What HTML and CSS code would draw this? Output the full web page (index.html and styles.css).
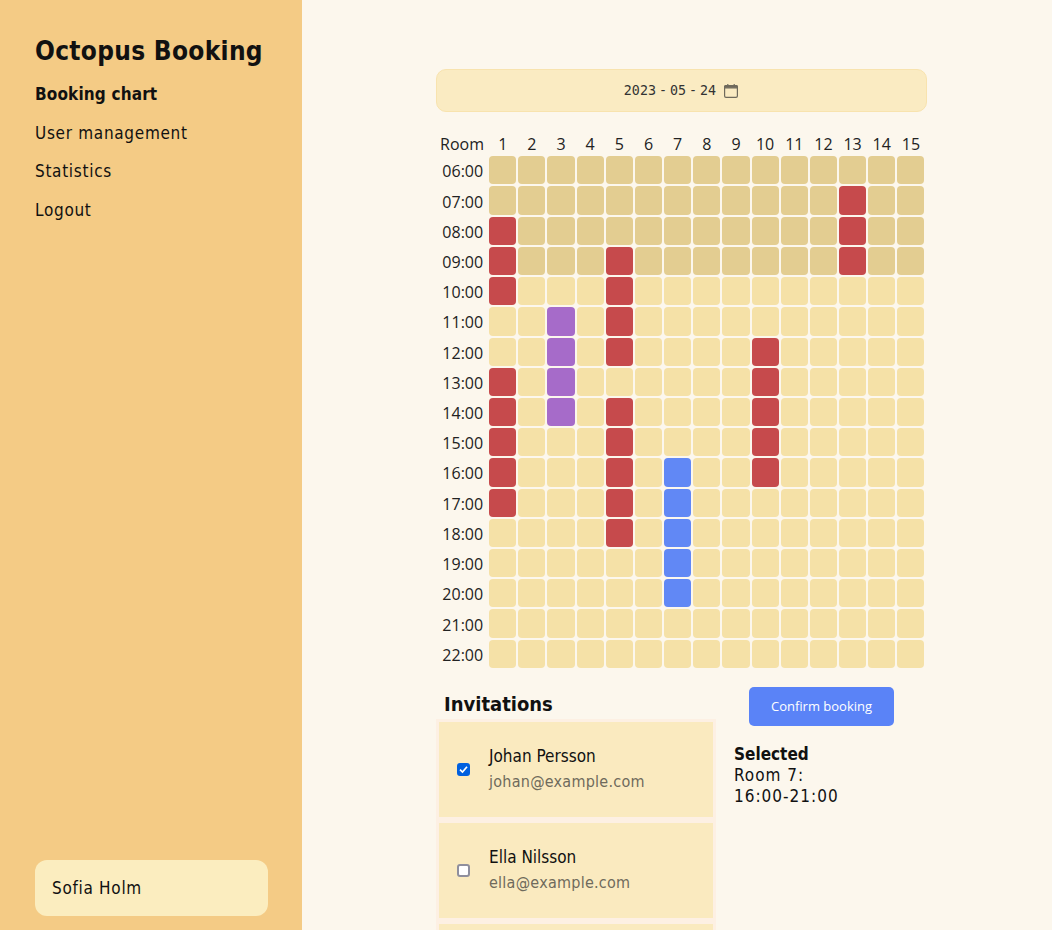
FILE: index.html
```html
<!DOCTYPE html>
<html lang="en">
<head>
    <meta charset="UTF-8">
    <meta name="viewport" content="width=device-width, initial-scale=1.0">
    <title>Octopus Booking</title>
    <link rel="stylesheet" href="styles.css">
</head>
<body>
<div class="app">
    <!-- Sidebar -->
    <aside class="sidebar">
        <h1 class="brand">Octopus Booking</h1>
        <nav class="nav">
            <a class="nav-link active" href="#">Booking chart</a>
            <a class="nav-link" href="#">User management</a>
            <a class="nav-link" href="#">Statistics</a>
            <a class="nav-link" href="#">Logout</a>
        </nav>
        <div class="user-box">Sofia Holm</div>
    </aside>

    <!-- Main content -->
    <main class="main">
        <div class="content">
            <div class="date-bar">
                <span class="date-text">2023<span class="sep">-</span>05<span class="sep">-</span>24</span>
                <svg class="cal-icon" width="16" height="16" viewBox="0 0 16 16" fill="none" stroke="#6f6a5c" stroke-width="1.2">
                    <rect x="1.6" y="2.6" width="12.8" height="11.8" rx="1.4"/>
                    <path d="M1.6 4 a1.4 1.4 0 0 1 1.4-1.4 h10 a1.4 1.4 0 0 1 1.4 1.4 V4.8 H1.6 Z" fill="#6f6a5c"/>
                    <path d="M4.8 1v2M11.2 1v2"/>
                </svg>
            </div>

            <div class="chart" id="chart"></div>

            <div class="lower">
                <section class="invitations">
                    <h2 class="inv-title">Invitations</h2>
                    <ul class="inv-list">
                        <li class="inv-card">
                            <input type="checkbox" checked>
                            <div>
                                <div class="inv-name">Johan Persson</div>
                                <div class="inv-mail">johan@example.com</div>
                            </div>
                        </li>
                        <li class="inv-card">
                            <input type="checkbox">
                            <div>
                                <div class="inv-name">Ella Nilsson</div>
                                <div class="inv-mail">ella@example.com</div>
                            </div>
                        </li>
                        <li class="inv-card"></li>
                    </ul>
                </section>
                <section class="summary">
                    <button class="confirm" type="button">Confirm booking</button>
                    <div class="selected">
                        <strong>Selected</strong><br>
                        Room 7:<br>
                        16:00-21:00
                    </div>
                </section>
            </div>
        </div>
    </main>
</div>
<script src="script.js"></script>
</body>
</html>
```

FILE: styles.css
```css
* {
    box-sizing: border-box;
}

html, body {
    height: 100%;
}

body {
    margin: 0;
    font-family: "DejaVu Sans Condensed", "DejaVu Sans", sans-serif;
    color: #111;
    background-color: #fcf7ed;
}

.app {
    display: flex;
    height: 100vh;
    overflow: hidden;
}

.sidebar {
    display: flex;
    flex-direction: column;
    flex: 0 0 302px;
    width: 302px;
    padding: 35px 34px 14px 35px;
    background-color: #f4cb85;
}

.brand {
    margin: 0 0 17px;
    font-size: 26px;
    font-weight: 700;
    line-height: 33px;
    letter-spacing: 0.3px;
    white-space: nowrap;
}

.nav {
    display: flex;
    flex-direction: column;
    flex: 1;
    gap: 19px;
}

.nav-link {
    font-size: 17px;
    line-height: 19.5px;
    letter-spacing: 0.7px;
    color: #111;
    text-decoration: none;
}

.nav-link.active {
    font-weight: 700;
    letter-spacing: 0.15px;
}

.user-box {
    height: 56px;
    padding: 0 17px;
    border-radius: 12px;
    background-color: #fbedbf;
    font-size: 17px;
    line-height: 56px;
    letter-spacing: 0.7px;
}

.main {
    flex: 1;
    min-width: 0;
}

.content {
    width: 491px;
    margin: 69px 0 0 134px;
}

.date-bar {
    display: flex;
    align-items: center;
    justify-content: center;
    gap: 7px;
    height: 43px;
    border: 1px solid #f8e3ae;
    border-radius: 10px;
    background-color: #faebc2;
}

.date-text {
    font-family: "DejaVu Sans Mono", monospace;
    font-size: 13.33px;
    color: #333;
}

.sep {
    margin: 0 3px;
}

.cal-icon {
    display: block;
}

.chart {
    display: grid;
    grid-template-columns: 47.15px repeat(15, 27.16px);
    grid-template-rows: 22.2px;
    grid-auto-rows: 28.22px;
    column-gap: 2px;
    row-gap: 2px;
    margin: 20px 0 0 4px;
    font-family: "Open Sans", sans-serif;
    font-size: 16px;
}

.head, .time {
    display: flex;
    align-items: center;
    justify-content: center;
    padding-top: 2px;
    color: #222;
}

.head:first-child {
    padding-right: 3px;
}

.time {
    justify-content: flex-end;
    padding-right: 4px;
}

.cell {
    border-radius: 4px;
    background-color: #f5e1a7;
}

.cell.past {
    background-color: #e3cd91;
}

.cell.booked {
    background-color: #c64a4c;
}

.cell.invited {
    background-color: #a66bc9;
}

.cell.selected-cell {
    background-color: #6188f5;
}

.lower {
    display: flex;
    margin-top: 16px;
}

.invitations {
    flex: 0 0 280px;
}

.inv-title {
    margin: 0 0 1px 8px;
    padding-top: 6px;
    font-size: 20px;
    font-weight: 700;
    line-height: 28px;
}

.inv-list {
    margin: 0;
    padding: 0;
    list-style: none;
}

.inv-card {
    display: flex;
    align-items: center;
    gap: 19px;
    height: 101px;
    padding: 0 18px 0 18px;
    border: 3px solid #fdf0e3;
    background-color: #faeabf;
}

.inv-card input {
    flex: none;
    width: 13px;
    height: 13px;
    margin: 0;
    appearance: none;
    border: 2px solid #8f8f9d;
    border-radius: 3px;
    background-color: white;
}

.inv-card input:checked {
    border-color: #0060df;
    background: #0060df url("data:image/svg+xml,%3Csvg xmlns='http://www.w3.org/2000/svg' viewBox='0 0 9 9'%3E%3Cpath d='M1 4.6 3.5 7 8 1.8' fill='none' stroke='white' stroke-width='1.7'/%3E%3C/svg%3E") center / 9px 9px no-repeat;
}

.inv-name {
    font-size: 17px;
    line-height: 25px;
}

.inv-mail {
    font-size: 16px;
    line-height: 25px;
    letter-spacing: 0.25px;
    color: #6f6a5c;
}

.summary {
    flex: 1;
}

.confirm {
    display: block;
    width: 145px;
    height: 39px;
    margin: 3px 0 0 33px;
    border: none;
    border-radius: 5px;
    background-color: #5a83f7;
    color: white;
    font-family: "Open Sans", sans-serif;
    font-size: 13px;
}

.selected {
    margin: 18px 0 0 18px;
    font-size: 17px;
    line-height: 21px;
    letter-spacing: 1px;
}

.selected strong {
    letter-spacing: 0;
}
```

FILE: script.js
```js
// Booked ranges per room: [room, first hour, last hour, kind]
const bookings = [
    [1, 8, 10, 'booked'],
    [1, 13, 17, 'booked'],
    [3, 11, 14, 'invited'],
    [5, 9, 12, 'booked'],
    [5, 14, 18, 'booked'],
    [7, 16, 20, 'selected-cell'],
    [10, 12, 16, 'booked'],
    [13, 7, 9, 'booked']
];

const chart = document.getElementById('chart');

function addText(className, text) {
    const el = document.createElement('div');
    el.className = className;
    el.textContent = text;
    chart.appendChild(el);
}

addText('head', 'Room');
for (let room = 1; room <= 15; room++) {
    addText('head', room);
}

for (let hour = 6; hour <= 22; hour++) {
    addText('time', String(hour).padStart(2, '0') + ':00');
    for (let room = 1; room <= 15; room++) {
        const match = bookings.find(b => b[0] === room && hour >= b[1] && hour <= b[2]);
        let name = 'cell';
        if (hour < 10) name += ' past';
        if (match) name += ' ' + match[3];
        addText(name, '');
    }
}
```
